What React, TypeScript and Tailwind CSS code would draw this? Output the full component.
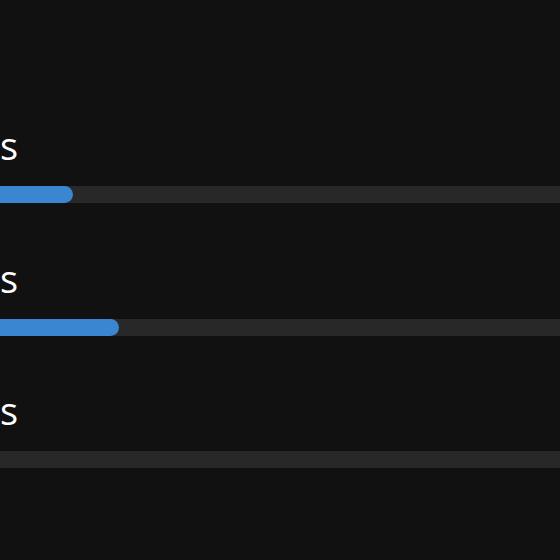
import React from "react";

const rows = [
  { label: "s", pct: 73 },
  { label: "s", pct: 119 },
  { label: "s", pct: 0 },
];

export default function App() {
  return (
    <div
      className="w-[560px] h-[560px] bg-[#111111] overflow-hidden pt-[126px] flex flex-col gap-[55.5px]"
      style={{ fontFamily: '"Open Sans", "Noto Sans", sans-serif' }}
    >
      {rows.map((r, i) => (
        <div key={i} className="flex flex-col gap-[22px]">
          <div className="text-[38px] leading-[38px] text-white">{r.label}</div>
          <div className="h-[17px] w-[600px] bg-[#282828]">
            {r.pct > 0 && (
              <div
                className="h-full bg-[#3a86d0] rounded-r-full"
                style={{ width: `${r.pct}px` }}
              />
            )}
          </div>
        </div>
      ))}
    </div>
  );
}
